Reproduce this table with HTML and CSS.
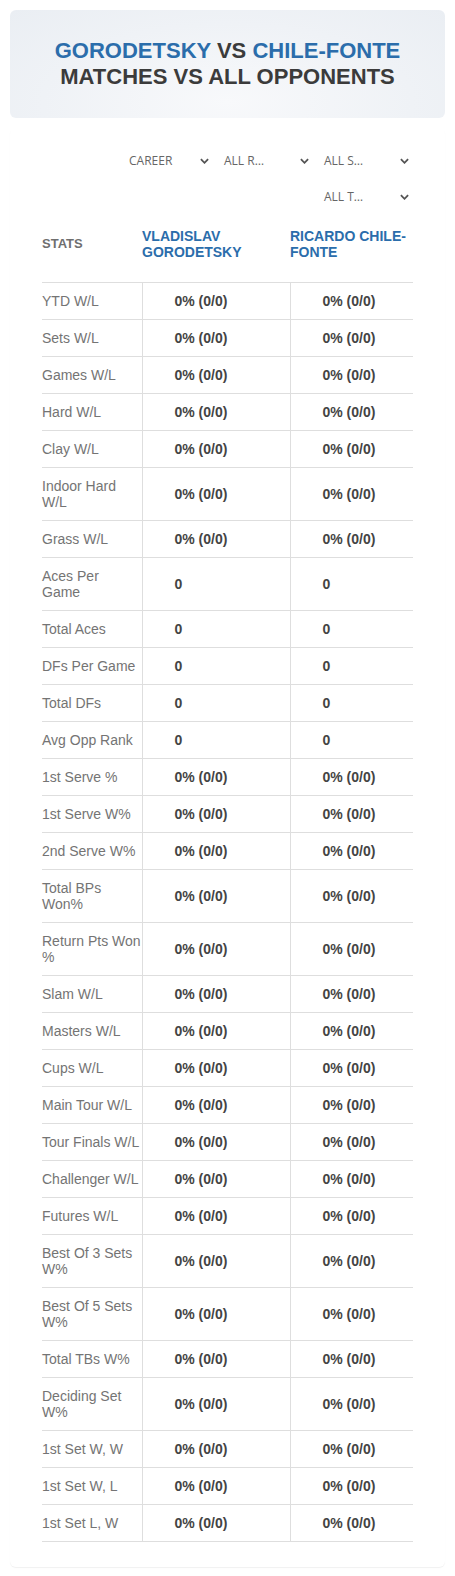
FILE: index.html
```html
<!DOCTYPE html>
<html lang="en">
<head>
  <meta charset="UTF-8" />
  <meta name="viewport" content="width=device-width, initial-scale=1.0"/>
  <title>Gorodetsky vs Chile-Fonte</title>
  <link rel="stylesheet" href="styles.css">
</head>
<body>
  <div class="page">
    <div class="title-card">
      <h1>
        <span class="player">GORODETSKY</span> VS <span class="player">CHILE-FONTE</span><br>
        MATCHES VS ALL OPPONENTS
      </h1>
    </div>

    <div class="stats-card">
      <div class="filters">
        <div class="filter">CAREER <svg viewBox="0 0 10 6"><path d="M1 1l4 4 4-4"/></svg></div>
        <div class="filter">ALL R… <svg viewBox="0 0 10 6"><path d="M1 1l4 4 4-4"/></svg></div>
        <div class="filter">ALL S… <svg viewBox="0 0 10 6"><path d="M1 1l4 4 4-4"/></svg></div>
        <div class="filter">ALL T… <svg viewBox="0 0 10 6"><path d="M1 1l4 4 4-4"/></svg></div>
      </div>

      <table class="stats-table">
        <thead>
          <tr>
            <th class="col-stat">STATS</th>
            <th class="col-a">VLADISLAV GORODETSKY</th>
            <th class="col-b">RICARDO CHILE-FONTE</th>
          </tr>
        </thead>
        <tbody id="statsBody"></tbody>
      </table>
    </div>
  </div>

  <script>
    const rows = [
      ["YTD W/L", "0% (0/0)"],
      ["Sets W/L", "0% (0/0)"],
      ["Games W/L", "0% (0/0)"],
      ["Hard W/L", "0% (0/0)"],
      ["Clay W/L", "0% (0/0)"],
      ["Indoor Hard W/L", "0% (0/0)"],
      ["Grass W/L", "0% (0/0)"],
      ["Aces Per<br>Game", "0"],
      ["Total Aces", "0"],
      ["DFs Per Game", "0"],
      ["Total DFs", "0"],
      ["Avg Opp Rank", "0"],
      ["1st Serve %", "0% (0/0)"],
      ["1st Serve W%", "0% (0/0)"],
      ["2nd Serve W%", "0% (0/0)"],
      ["Total BPs Won%", "0% (0/0)"],
      ["Return Pts Won %", "0% (0/0)"],
      ["Slam W/L", "0% (0/0)"],
      ["Masters W/L", "0% (0/0)"],
      ["Cups W/L", "0% (0/0)"],
      ["Main Tour W/L", "0% (0/0)"],
      ["Tour Finals W/L", "0% (0/0)"],
      ["Challenger W/L", "0% (0/0)"],
      ["Futures W/L", "0% (0/0)"],
      ["Best Of 3 Sets W%", "0% (0/0)"],
      ["Best Of 5 Sets W%", "0% (0/0)"],
      ["Total TBs W%", "0% (0/0)"],
      ["Deciding Set W%", "0% (0/0)"],
      ["1st Set W, W", "0% (0/0)"],
      ["1st Set W, L", "0% (0/0)"],
      ["1st Set L, W", "0% (0/0)"]
    ];

    const body = document.getElementById('statsBody');
    rows.forEach(([label, value]) => {
      const tr = document.createElement('tr');
      tr.innerHTML = `
        <td class="label">${label}</td>
        <td class="value">${value}</td>
        <td class="value">${value}</td>
      `;
      body.appendChild(tr);
    });
  </script>
</body>
</html>
```

FILE: styles.css
```css
:root {
  --blue: #2b6dab;
  --text-dark: #3b3b3b;
  --text-grey: #6f6f6f;
  --line: #dedede;
}

body {
  margin: 0;
  background: #fff;
  font-family: 'Liberation Sans', Arial, sans-serif;
}

.page {
  padding: 10px;
}

.title-card {
  border-radius: 6px;
  background: radial-gradient(ellipse at 50% 85%, #f8f9fb 0%, #eff2f6 60%, #eaeef3 100%);
  padding: 28px 10px 27px;
  text-align: center;
}

.title-card h1 {
  margin: 0;
  font-size: 22px;
  line-height: 1.2;
  font-weight: bold;
  color: var(--text-dark);
}

.title-card .player {
  color: var(--blue);
}

.stats-card {
  margin-top: 10px;
  background: #fff;
  border-radius: 6px;
  padding: 18px 32px 25px;
  box-shadow: 0 1px 1px rgba(0,0,0,0.06);
}

/* filters */
.filters {
  display: flex;
  flex-wrap: wrap;
  justify-content: flex-end;
  gap: 6px 10px;
  padding-right: 4px;
}

.filter {
  width: 90px;
  height: 30px;
  box-sizing: border-box;
  padding-left: 5px;
  display: flex;
  align-items: center;
  justify-content: space-between;
  font-family: 'Open Sans', sans-serif;
  font-size: 12px;
  color: #666;
}

.filter:first-child {
  padding-left: 10px;
}

.filter svg {
  width: 9px;
  height: 6px;
  fill: none;
  stroke: #555;
  stroke-width: 2;
}

/* table */
.stats-table {
  width: 371px;
  border-collapse: collapse;
  table-layout: fixed;
}

.stats-table th {
  box-sizing: border-box;
  text-align: left;
  font-size: 14px;
  line-height: 16px;
  font-weight: bold;
  padding: 16px 0 22px;
  border-bottom: 1px solid var(--line);
  vertical-align: middle;
}

.stats-table .col-stat {
  width: 100px;
  font-size: 13px;
  color: var(--text-grey);
}

.stats-table .col-a {
  width: 148px;
  color: var(--blue);
}

.stats-table .col-b {
  color: var(--blue);
}

.stats-table td {
  padding: 10px 0;
  font-size: 14px;
  line-height: 16px;
  border-bottom: 1px solid var(--line);
}

.stats-table .label {
  color: #747474;
}

.stats-table .value {
  padding-left: 32px;
  border-left: 1px solid var(--line);
  font-weight: bold;
  color: #444;
}
```
